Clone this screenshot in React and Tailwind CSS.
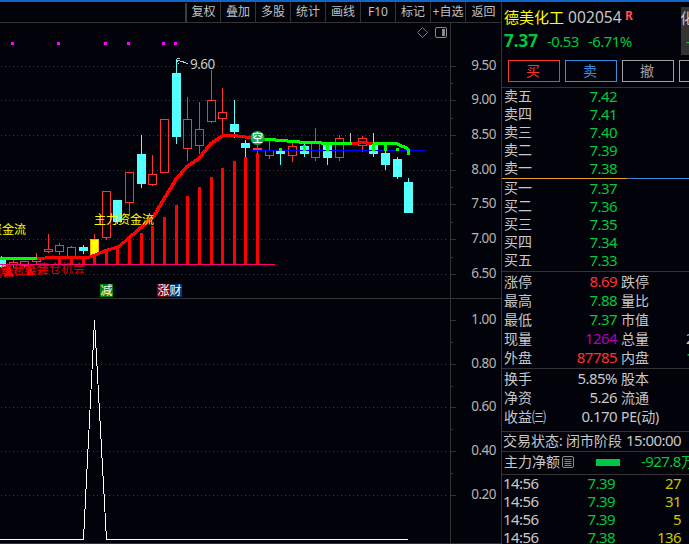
import React from "react";

const RED = "#ff3232";
const CYAN = "#54ffff";

// [center x, kind, body top, body bottom, wick top, wick bottom]
const CANDLES = [
  [1, "down", 260, 267, 256, 268],
  [13, "up", 262, 265, 260, 268],
  [24, "up", 261, 266, 261, 268],
  [36, "up", 259, 262, 253, 264],
  [48, "up", 249, 252, 234, 253],
  [59, "up", 245, 252, 243, 255],
  [71, "up", 247, 258, 246, 258],
  [83, "down", 247, 251, 245, 254],
  [106, "up", 191, 238, 191, 240],
  [117, "down", 200, 222, 200, 224],
  [129, "up", 172, 203, 172, 216],
  [141, "down", 154, 184, 135, 188],
  [152, "up", 174, 185, 155, 186],
  [164, "up", 119, 173, 119, 173],
  [176, "down", 73, 137, 59, 144],
  [187, "up", 119, 149, 97, 161],
  [199, "up", 129, 146, 102, 154],
  [211, "up", 100, 122, 70, 123],
  [222, "up", 112, 119, 88, 134],
  [234, "down", 124, 132, 100, 138],
  [245, "down", 143, 148, 140, 157],
  [257, "up", 148, 150, 145, 153],
  [269, "up", 150, 156, 141, 159],
  [280, "down", 151, 154, 148, 165],
  [292, "up", 146, 156, 143, 162],
  [304, "down", 146, 154, 144, 157],
  [315, "up", 143, 158, 128, 161],
  [327, "down", 144, 158, 144, 165],
  [339, "up", 138, 158, 135, 161],
  [362, "up", 138, 146, 136, 152],
  [373, "down", 144, 154, 133, 157],
  [385, "down", 153, 165, 151, 170],
  [397, "down", 159, 177, 157, 179],
  [408, "down", 182, 213, 178, 213],
];

const BARS = [
  [59, 258], [71, 258], [83, 257], [94, 256], [106, 250], [117, 247], [129, 240], [141, 233],
  [152, 226], [164, 217], [176, 205], [187, 196], [199, 187], [211, 177],
  [222, 168], [234, 161], [245, 157], [257, 153],
];

const GREEN_BARS = [
  [280, 148, 151], [304, 145, 151], [327, 144, 151], [373, 144, 151],
  [385, 144, 151], [397, 148, 151], [408, 149, 155],
];

const PRICE_TICKS = [[66, "9.50"], [100, "9.00"], [135, "8.50"], [170, "8.00"], [204, "7.50"], [239, "7.00"], [274, "6.50"]];
const LOWER_TICKS = [[320, "1.00"], [364, "0.80"], [407, "0.60"], [451, "0.40"], [495, "0.20"]];
const MINOR = [83, 118, 153, 187, 222, 257, 342, 386, 429, 473];
const DOTS = [12, 58, 105, 128, 163, 175];
const TOOLS = ["复权", "叠加", "多股", "统计", "画线", "F10", "标记", "+自选", "返回"];

function Candle({ d }) {
  const [x, kind, top, bottom, high, low] = d;
  if (kind === "down") {
    return (
      <g fill={CYAN}>
        <rect x={x} y={high} width="1" height={low - high} />
        <rect x={x - 4} y={top} width="9" height={bottom - top} />
      </g>
    );
  }
  return (
    <g>
      <rect x={x} y={high} width="1" height={top - high} fill={RED} />
      <rect x={x} y={bottom} width="1" height={low - bottom} fill={RED} />
      <rect x={x - 3.5} y={top + 0.5} width="8" height={bottom - top - 1} fill="none" stroke={RED} />
    </g>
  );
}

function Chart() {
  return (
    <svg className="block" width="501" height="521" viewBox="0 23 501 521" shapeRendering="crispEdges" fontFamily="'Noto Sans','Noto Sans CJK SC',sans-serif">
      {[...PRICE_TICKS, ...LOWER_TICKS.slice(1)].map(([y]) => (
        <line key={y} x1="1" x2="447" y1={y + 0.5} y2={y + 0.5} stroke="#3c3c3c" strokeDasharray="1 3" />
      ))}
      <g fill="#333333">
        <rect x="450" y="23" width="1" height="521" />
        <rect x="0" y="298" width="501" height="1" />
        <rect x="0" y="543" width="501" height="1" />
        {[...PRICE_TICKS, ...LOWER_TICKS].map(([y]) => <rect key={y} x="450" y={y} width="6" height="1" />)}
        {MINOR.map((y) => <rect key={y} x="450" y={y} width="3" height="1" />)}
      </g>
      <g fill="#b4b4b4" fontSize="13.5" textAnchor="end" letterSpacing="-0.5">
        {[...PRICE_TICKS, ...LOWER_TICKS].map(([y, t]) => <text key={y} x="496" y={y + 4}>{t}</text>)}
      </g>

      <path d="M422.5 27.5l5 5-5 5-5-5z" fill="none" stroke="#777" shapeRendering="auto" />
      <rect x="435.5" y="27.5" width="11" height="10" rx="1.5" fill="none" stroke="#8a8a8a" shapeRendering="auto" />
      <rect x="442" y="29" width="3" height="7" fill="#8a8a8a" />

      {DOTS.map((x) => <rect key={x} x={x - 1} y="42" width="3" height="3" fill="#ff00ff" />)}

      {CANDLES.map((d) => <Candle key={d[0]} d={d} />)}
      <rect x="350" y="133" width="1" height="11" fill="#c0c0c0" />
      <rect x="94" y="234" width="1" height="6" fill={RED} />
      <rect x="90.5" y="239.5" width="8" height="15" fill="#ffff00" stroke="#ffb000" />
      <rect x="253" y="148" width="9" height="2" fill={RED} />

      <g fill="#ff0000">
        {BARS.map(([x, y]) => <rect key={x} x={x - 1} y={y} width="3" height={264 - y} />)}
      </g>
      <g fill="#f00000" fontSize="12" fillOpacity="0.9">
        <text x="37" y="272.5">建仓机会</text>
        <text x="0" y="273.5">建仓机会</text>
        <text x="-11" y="274.5">建仓机会</text>
        <text x="-34" y="276.5">建仓机会</text>
      </g>
      <path d="M9 267l5 9H4zM30 266l4 9h-8z" fill="#ff0000" />
      <rect x="0" y="264" width="275" height="1" fill="#ff0080" />
      <rect x="252" y="150" width="174" height="1" fill="#0000ff" />

      <g fill="none" strokeWidth="3" strokeLinejoin="round">
        <path d="M0 258.5H37" stroke="#00ff00" />
        <path d="M37 258.5L54 257.5 88 257.5 94 255.5 106 250.5 118 247 129 238" stroke="#ff0000" />
        <path d="M129 238L141 227.5 152 218 154 216 164 199 176 179.5 187 166.5 199 158.5 211 143.5 222 136" stroke="#ff0000" strokeWidth="3.6" />
        <path d="M222 136L234 135.5 245 137 252 138" stroke="#ff0000" />
        <path d="M262 139.5L275 139.5 276 140.5 287 140.5 288 141.5 299 141.5 300 142.5 321 142.5 322 143.5 352 143.5" stroke="#00ff00" />
        <path d="M352 143.5L357 143.5 358 142.5 367 142.5 368 143.5 373 143.5" stroke="#ff0000" />
        <path d="M373 143.5H397L402 146.5 405 147 408.5 150" stroke="#00ff00" />
      </g>
      <g fill="#00ff00">
        {GREEN_BARS.map(([x, a, b]) => <rect key={x} x={x - 1} y={a} width="3" height={b - a} />)}
      </g>

      <g fill="none" stroke="#c8c8c8">
        <path d="M177 60.5h3M180 61.5h4M183 62.5h3M186 63.5h2M177 58.5h3M177 61.5h1M178 63h1" />
      </g>
      <text x="190" y="69" fontSize="13.5" letterSpacing="-0.5" fill="#c8c8c8">9.60</text>

      <g fontSize="12" fill="#ffff00">
        <text x="94" y="224">主力资金流</text>
        <text x="-34" y="233.5">主力资金流</text>
      </g>

      <g shapeRendering="auto">
        <circle cx="257.5" cy="138" r="7" fill="#18b050" stroke="#0b6b2c" strokeWidth="0.6" />
        <text x="257.5" y="142" fontSize="11" textAnchor="middle" fill="#fff" fontWeight="500">空</text>
      </g>

      <rect x="100" y="284" width="13" height="13" fill="#008000" />
      <rect x="157" y="284" width="12" height="13" fill="#800000" />
      <rect x="169" y="284" width="13" height="13" fill="#003a70" />
      <g fontSize="12" fill="#fff">
        <text x="100.5" y="295">减</text>
        <text x="157.5" y="295">涨</text>
        <text x="169.5" y="295">财</text>
      </g>

      <path d="M0 539.5H83.5L94.5 320 106.5 539.5H408" fill="none" stroke="#ffffff" />
    </svg>
  );
}

const NUM = "text-[15px] tracking-[-0.55px]";

function BookRow({ label, price }) {
  return (
    <div className="flex h-[18px] items-center leading-[18px]">
      <span className="w-[52px] text-sm leading-[18px]">{label}</span>
      <span className={`w-[61px] text-right text-[#00c83c] ${NUM}`}>{price}</span>
    </div>
  );
}

function StatRow({ label, value, color, right, edge, edgeColor }) {
  return (
    <div className="flex h-[19px] items-center leading-[19px]">
      <span className="w-[48px] shrink-0 text-sm leading-[19px]">{label}</span>
      <span className={`w-[65px] shrink-0 text-right ${NUM} ${color}`}>{value}</span>
      <span className="ml-1 w-[65px] shrink-0 text-sm leading-[19px] tracking-[-0.1px]">{right}</span>
      {edge && <span className={`shrink-0 ${NUM} ${edgeColor}`}>{edge}</span>}
    </div>
  );
}

function ListIcon() {
  return (
    <svg width="13" height="13" viewBox="0 0 13 13" className="ml-[2px] shrink-0" fill="none" stroke="#8a8a8a">
      <rect x="0.5" y="0.5" width="11" height="11" rx="1.5" />
      <path d="M2.5 3.5h7M2.5 5.5h7M2.5 7.5h7M2.5 9.5h7" />
    </svg>
  );
}

function Sidebar() {
  return (
    <aside className="flex w-[188px] shrink-0 flex-col overflow-hidden border-l border-[#333333] whitespace-nowrap text-[#c8c8c8] [&>*]:shrink-0">
      <div className="flex h-[86px] flex-col border-b border-[#333333]">
        <div className="flex h-[58px] justify-between">
          <div className="pl-[2px]">
            <div className="mt-[5px] flex h-5 items-center leading-5">
              <span className="w-16 text-[15px] text-[#ffff00]">德美化工</span>
              <span className="w-[57px] text-[15.5px] tracking-[0.1px]">002054</span>
              <span className="-mt-[3px] text-[12px] font-bold text-[#ff5050]">R</span>
            </div>
            <div className="mt-1 flex h-5 items-center leading-5 text-[#00c83c]">
              <span className="w-[43px] text-[17px] font-bold">7.37</span>
              <span className={`w-[41px] ${NUM}`}>-0.53</span>
              <span className={NUM}>-6.71%</span>
            </div>
          </div>
          <div className="mt-[5px] flex h-12 w-2 shrink-0 flex-col overflow-hidden bg-[#333333]">
            <span className="-ml-px mt-[3px] text-sm leading-4">化</span>
            <span className="ml-[5px] mt-2 text-sm leading-4 text-[#00c83c]">-</span>
          </div>
        </div>
        <div className="flex gap-[5px] pl-[6px] text-sm leading-5">
          <div className="h-[22px] w-[52px] shrink-0 border border-[#ff3232] pr-[2px] text-center text-[#ff3232]">买</div>
          <div className="h-[22px] w-[52px] shrink-0 border border-[#3c8cdc] pr-[2px] text-center text-[#3c8cdc]">卖</div>
          <div className="h-[22px] w-[52px] shrink-0 border border-[#a0a0a0] pr-[2px] text-center text-[#a0a0a0]">撤</div>
          <div className="h-[22px] w-[52px] shrink-0 border border-[#a0a0a0]" />
        </div>
      </div>

      <div className="-mt-px h-[91px] pl-[2px]">
        <BookRow label="卖五" price="7.42" />
        <BookRow label="卖四" price="7.41" />
        <BookRow label="卖三" price="7.40" />
        <BookRow label="卖二" price="7.39" />
        <BookRow label="卖一" price="7.38" />
      </div>
      <div className="flex h-px">
        <div className="w-[125px] bg-[#e6a028]" />
        <div className="flex-1 bg-[#3c8cdc]" />
      </div>
      <div className="h-[93px] border-b border-[#333333] pl-[2px]">
        <BookRow label="买一" price="7.37" />
        <BookRow label="买二" price="7.36" />
        <BookRow label="买三" price="7.35" />
        <BookRow label="买四" price="7.34" />
        <BookRow label="买五" price="7.33" />
      </div>

      <div className="h-[97px] border-b border-[#333333] pl-[2px]">
        <StatRow label="涨停" value="8.69" color="text-[#ff3232]" right="跌停" />
        <StatRow label="最高" value="7.88" color="text-[#00c83c]" right="量比" />
        <StatRow label="最低" value="7.37" color="text-[#00c83c]" right="市值" />
        <StatRow label="现量" value="1264" color="text-[#b400b4]" right="总量" edge="2" edgeColor="text-[#c8c8c8]" />
        <StatRow label="外盘" value="87785" color="text-[#ff3232]" right="内盘" edge="1" edgeColor="text-[#00c83c]" />
      </div>

      <div className="h-[63px] border-b border-[#333333] pl-[2px]">
        <StatRow label="换手" value="5.85%" color="" right="股本" />
        <StatRow label="净资" value="5.26" color="" right="流通" />
        <StatRow label="收益㈢" value="0.170" color="" right="PE(动)" />
      </div>

      <div className="flex h-5 items-center border-b border-[#333333] pb-[2px] pl-px text-sm leading-[17px]">
        <span className="w-[63px]">交易状态:</span>
        <span className="w-[60px]">闭市阶段</span>
        <span className={NUM}>15:00:00</span>
      </div>
      <div className="flex h-[23px] items-center border-b border-[#333333] pb-[2px] pl-[2px] text-sm">
        <span>主力净额</span>
        <ListIcon />
        <div className="ml-[21px] h-[7px] w-6 shrink-0 bg-[#00c83c]" />
        <span className="ml-[21px] text-[#00c83c]"><span className={NUM}>-927.8</span>万</span>
      </div>

      <div className="-mt-px">
        {[["7.39", "27"], ["7.39", "31"], ["7.39", "5"], ["7.38", "136"]].map(([p, v], i) => (
          <div key={i} className={`flex h-[18px] items-center pl-px leading-[18px] ${NUM}`}>
            <span className="w-[52px]">14:56</span>
            <span className="w-[60px] text-right text-[#00c83c]">{p}</span>
            <span className="w-[66px] text-right text-[#c8c800]">{v}</span>
          </div>
        ))}
      </div>
    </aside>
  );
}

export default function App() {
  return (
    <div className="flex h-[544px] w-[689px] flex-col overflow-hidden bg-[#02020a] font-['Noto_Sans','Noto_Sans_CJK_SC',sans-serif]">
      <div className="h-[2px] shrink-0 bg-[#1464c8]" />
      <div className="flex min-h-0 flex-1">
        <main className="flex w-[501px] shrink-0 flex-col">
          <div className="flex h-[21px] shrink-0 border-b border-[#333333] pl-[185px] text-xs leading-5 whitespace-nowrap text-[#c0c0c0]">
            <div className="mt-px w-[2px] shrink-0 bg-[#3c3c3c]" />
            {TOOLS.map((t, i) => (
              <div
                key={t}
                className={`shrink-0 overflow-hidden text-center ${i === 0 ? "w-[34px]" : "w-[35px]"} ${i < 8 ? "border-r border-[#333333]" : ""}`}
              >
                {t}
              </div>
            ))}
          </div>
          <Chart />
        </main>
        <Sidebar />
      </div>
    </div>
  );
}
